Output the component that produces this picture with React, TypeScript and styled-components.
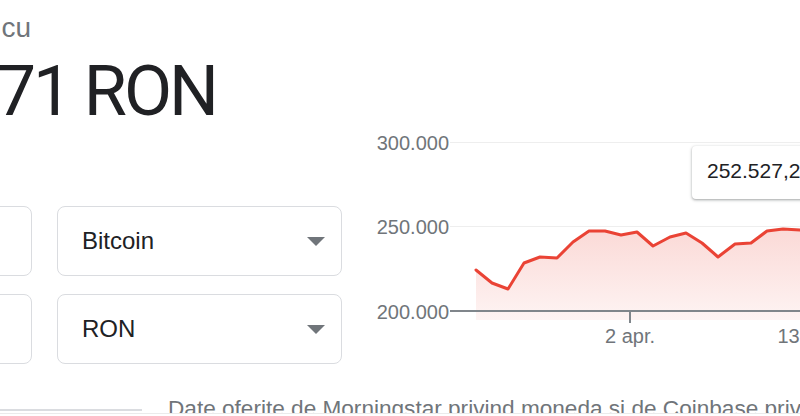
import React from "react";
import styled, { createGlobalStyle } from "styled-components";

const GlobalStyle = createGlobalStyle`
  html, body {
    margin: 0;
    padding: 0;
    background: #ffffff;
    width: 800px;
    height: 416px;
    overflow: hidden;
  }
  body {
    font-family: "Liberation Sans", Arial, sans-serif;
    color: #202124;
  }
  #root {
    width: 800px;
    height: 416px;
    overflow: hidden;
  }
`;

const Page = styled.div`
  margin-left: -143px;
  width: 1100px;
  display: flex;
  flex-direction: column;
`;

const Top = styled.div`
  display: flex;
  align-items: flex-start;
  height: 364px;
`;

const Left = styled.div`
  width: 485px;
  flex: none;
  display: flex;
  flex-direction: column;
  padding-top: 13px;
`;

const Caption = styled.div`
  width: 174px;
  display: flex;
  justify-content: flex-end;
  font-size: 28px;
  line-height: 30px;
  word-spacing: 8px;
  color: #70757a;
  white-space: nowrap;
`;

const PriceLine = styled.div`
  margin-top: 13px;
  width: 359px;
  height: 70px;
  display: flex;
  justify-content: flex-end;
  white-space: nowrap;
  font-family: Roboto, "Liberation Sans", sans-serif;
  font-weight: 400;
  font-size: 70px;
  line-height: 70px;
  letter-spacing: -3px;
  color: #202124;
`;

const Converter = styled.div`
  margin-top: 80px;
  display: grid;
  grid-template-columns: 175px 285px;
  grid-auto-rows: 70px;
  column-gap: 25px;
  row-gap: 18px;
`;

const Field = styled.div<{ $select?: boolean }>`
  box-sizing: border-box;
  border: 1px solid #dadce0;
  border-radius: 8px;
  display: flex;
  align-items: center;
  justify-content: space-between;
  padding: ${(p) => (p.$select ? "0 16px 0 24px" : "0 16px 0 8px")};
  font-size: 24px;
  color: #202124;
  white-space: nowrap;
  overflow: hidden;
`;

const Caret = () => (
  <svg width="18" height="9" viewBox="0 0 18 9" aria-hidden="true">
    <polygon points="0,0 18,0 9,9" fill="#70757a" />
  </svg>
);

const ChartArea = styled.div`
  position: relative;
  margin-left: 18px;
  margin-top: 120px;
  width: 440px;
  height: 230px;
  flex: none;
`;

const ChartSvg = styled.svg`
  display: block;
  overflow: visible;
  font-family: "Liberation Sans", Arial, sans-serif;
`;

const Tooltip = styled.div`
  position: absolute;
  left: 332px;
  top: 26px;
  width: 170px;
  height: 53px;
  box-sizing: border-box;
  padding: 0 0 4px 15px;
  display: flex;
  align-items: center;
  background: #ffffff;
  border-radius: 4px;
  box-shadow: 0 1px 2px rgba(60, 64, 67, 0.3), 0 1px 3px 1px rgba(60, 64, 67, 0.15);
  font-size: 21px;
  color: #202124;
  white-space: nowrap;
`;

const Footer = styled.div`
  margin-top: 32px;
  height: 17px;
  display: flex;
  align-items: flex-start;
  overflow: hidden;
  border-bottom: 1px solid #ebebeb;
  width: 943px;
`;

const Rule = styled.div`
  width: 285px;
  height: 2px;
  margin-top: 13px;
  background: #dadce0;
  flex: none;
`;

const Note = styled.div`
  margin-left: 26px;
  font-size: 22.6px;
  line-height: 25px;
  color: #70757a;
  white-space: nowrap;
`;

const points: [number, number][] = [
  [476, 270],
  [492, 283],
  [508, 289],
  [524, 263],
  [540, 257],
  [557, 258],
  [573, 242],
  [589, 231],
  [605, 231],
  [621, 235],
  [637, 232],
  [653, 246],
  [670, 237],
  [686, 233],
  [702, 243],
  [718, 257],
  [735, 244],
  [751, 243],
  [767, 231],
  [783, 229],
  [800, 230],
  [816, 230],
];

const linePts = points.map(([x, y]) => `${x},${y}`).join(" ");
const areaPath =
  `M${points[0][0]},320 ` +
  points.map(([x, y]) => `L${x},${y}`).join(" ") +
  ` L${points[points.length - 1][0]},320 Z`;

const yLabels = [
  { text: "300.000", y: 149.5 },
  { text: "250.000", y: 234 },
  { text: "200.000", y: 319 },
];

const Chart = () => (
  <ChartArea>
    <ChartSvg width="440" height="230" viewBox="360 120 440 230">
      <defs>
        <linearGradient id="areaFill" x1="0" y1="0" x2="0" y2="1">
          <stop offset="0" stopColor="#ea4335" stopOpacity="0.2" />
          <stop offset="1" stopColor="#ea4335" stopOpacity="0.06" />
        </linearGradient>
      </defs>
      <line x1="450" y1="142.5" x2="820" y2="142.5" stroke="#eeeeee" strokeWidth="1" />
      <line x1="450" y1="226.5" x2="820" y2="226.5" stroke="#eeeeee" strokeWidth="1" />
      <path d={areaPath} fill="url(#areaFill)" />
      <line x1="450" y1="311" x2="820" y2="311" stroke="#80868b" strokeWidth="2" />
      <line x1="630" y1="311" x2="630" y2="323" stroke="#80868b" strokeWidth="2" />
      <polyline
        points={linePts}
        fill="none"
        stroke="#ea4335"
        strokeWidth="3"
        strokeLinejoin="round"
        strokeLinecap="round"
      />
      {yLabels.map((l) => (
        <text key={l.text} x="449" y={l.y} textAnchor="end" fontSize="20" fill="#70757a">
          {l.text}
        </text>
      ))}
      <text x="630" y="343" textAnchor="middle" fontSize="20" fill="#70757a">
        2 apr.
      </text>
      <text x="808" y="343" textAnchor="middle" fontSize="20" fill="#70757a">
        13 apr.
      </text>
    </ChartSvg>
    <Tooltip>252.527,24 RON</Tooltip>
  </ChartArea>
);

export default function App() {
  return (
    <>
      <GlobalStyle />
      <Page>
        <Top>
          <Left>
            <Caption>
              <span>1 Bitcoin egal cu</span>
            </Caption>
            <PriceLine>
              <span>252.527,71 RON</span>
            </PriceLine>
            <Converter>
              <Field>1</Field>
              <Field $select>
                <span>Bitcoin</span>
                <Caret />
              </Field>
              <Field>252.527,71</Field>
              <Field $select>
                <span>RON</span>
                <Caret />
              </Field>
            </Converter>
          </Left>
          <Chart />
        </Top>
        <Footer>
          <Rule />
          <Note>Date oferite de Morningstar privind moneda si de Coinbase privind criptomonedele</Note>
        </Footer>
      </Page>
    </>
  );
}
